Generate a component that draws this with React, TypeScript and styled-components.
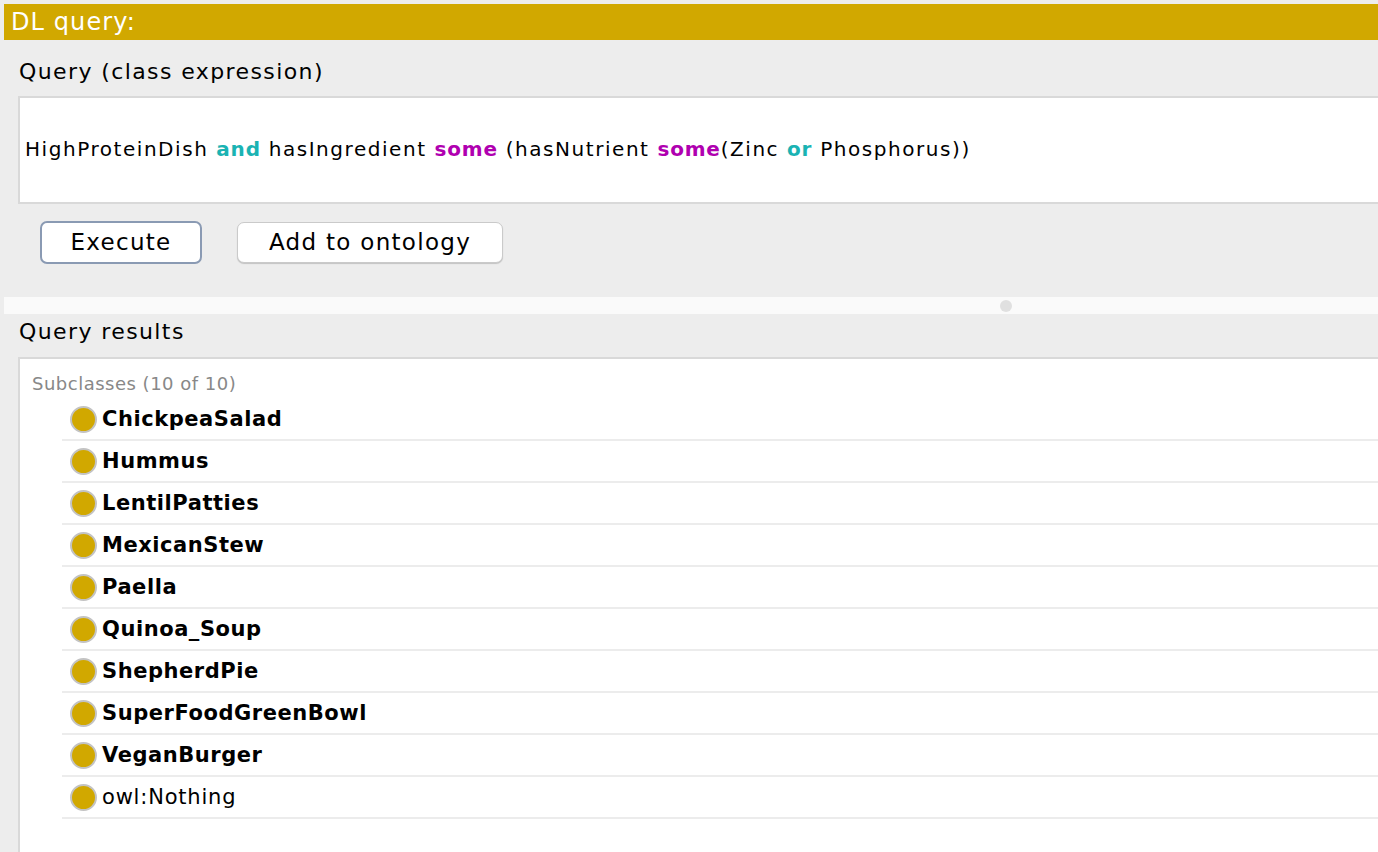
import React from "react";
import styled, { createGlobalStyle } from "styled-components";

const Global = createGlobalStyle`
  html, body { margin: 0; padding: 0; background: #ededed; }
  body { font-family: "DejaVu Sans", "Noto Sans", sans-serif; color: #000; }
`;

const Page = styled.div`
  width: 1378px;
  height: 852px;
  overflow: hidden;
  padding-top: 4px;
  box-sizing: border-box;
  display: flex;
  flex-direction: column;
`;

const TitleBar = styled.div`
  margin-left: 4px;
  height: 36px;
  background: #d1a800;
  color: #fff;
  font-size: 24px;
  line-height: 36px;
  padding-left: 7px;
  letter-spacing: 1.1px;
`;

const Section = styled.section<{ $grow?: boolean }>`
  padding-left: 18px;
  display: flex;
  flex-direction: column;
  flex: ${(p) => (p.$grow ? 1 : "none")};
`;

const SectionLabel = styled.div<{ $top: number; $bottom: number }>`
  font-size: 22px;
  height: 30px;
  line-height: 30px;
  padding-left: 1px;
  margin-top: ${(p) => p.$top}px;
  margin-bottom: ${(p) => p.$bottom}px;
  letter-spacing: 1.4px;
`;

const Editor = styled.div`
  height: 101px;
  background: #fff;
  border: 2px solid #d9d9d9;
  border-right: none;
  display: flex;
  align-items: center;
  padding-left: 5px;
  padding-bottom: 3px;
  font-size: 20px;
  letter-spacing: 1.55px;
  box-sizing: content-box;
`;

const Kw = styled.span<{ $c: string }>`
  color: ${(p) => p.$c};
  font-weight: bold;
  letter-spacing: 0.8px;
`;

const Buttons = styled.div`
  display: flex;
  align-items: center;
  gap: 35px;
  padding-left: 22px;
  height: 60px;
  margin-top: 15px;
`;

const Button = styled.button<{ $focused?: boolean; $w: number }>`
  width: ${(p) => p.$w}px;
  height: ${(p) => (p.$focused ? 43 : 41)}px;
  background: #fff;
  border-radius: 7px;
  border: ${(p) => (p.$focused ? "2px solid #8a9ab3" : "1px solid #cacaca")};
  box-shadow: ${(p) => (p.$focused ? "none" : "0 1px 1px rgba(0,0,0,0.18)")};
  font-family: "DejaVu Sans", sans-serif;
  font-size: 23px;
  letter-spacing: 1.3px;
  color: #000;
  padding: 0;
  margin-top: -14px;
`;

const Splitter = styled.div`
  margin-top: 18px;
  margin-left: 4px;
  height: 17px;
  background: #fafafa;
  display: flex;
  align-items: center;
  padding-left: 996px;
`;

const Grip = styled.div`
  width: 12px;
  height: 12px;
  border-radius: 50%;
  background: #e0e0e0;
`;

const ResultsBox = styled.div`
  flex: 1;
  background: #fff;
  border-left: 2px solid #d9d9d9;
  border-top: 2px solid #d9d9d9;
  display: flex;
  flex-direction: column;
`;

const GroupLabel = styled.div`
  font-size: 18px;
  color: #888;
  padding-left: 12px;
  padding-top: 10px;
  height: 30px;
  line-height: 30px;
  letter-spacing: 0.5px;
`;

const List = styled.ul`
  list-style: none;
  margin: 0;
  padding: 0 0 0 42px;
`;

const Row = styled.li`
  height: 40px;
  border-bottom: 2px solid #ececec;
  display: flex;
  align-items: center;
  padding-left: 8px;
  gap: 5px;
`;

const Dot = styled.span`
  width: 23px;
  height: 23px;
  border-radius: 50%;
  background: #d1a800;
  border: 2px solid #c3c3c3;
  flex: none;
`;

const Name = styled.span<{ $bold: boolean }>`
  font-size: 21px;
  font-weight: ${(p) => (p.$bold ? "bold" : "normal")};
  letter-spacing: ${(p) => (p.$bold ? 0.55 : 0.8)}px;
`;

const items = [
  "ChickpeaSalad",
  "Hummus",
  "LentilPatties",
  "MexicanStew",
  "Paella",
  "Quinoa_Soup",
  "ShepherdPie",
  "SuperFoodGreenBowl",
  "VeganBurger",
];

export default function App() {
  return (
    <Page>
      <Global />
      <TitleBar>DL query:</TitleBar>
      <Section>
        <SectionLabel $top={17} $bottom={9}>Query (class expression)</SectionLabel>
        <Editor>
          <span>
            HighProteinDish <Kw $c="#1ab3b3">and</Kw> hasIngredient{" "}
            <Kw $c="#b000b0">some</Kw> (hasNutrient <Kw $c="#b000b0">some</Kw>(Zinc{" "}
            <Kw $c="#1ab3b3">or</Kw> Phosphorus))
          </span>
        </Editor>
        <Buttons>
          <Button $focused $w={162}>Execute</Button>
          <Button $w={266}>Add to ontology</Button>
        </Buttons>
      </Section>
      <Splitter>
        <Grip />
      </Splitter>
      <Section $grow>
        <SectionLabel $top={3} $bottom={10}>Query results</SectionLabel>
        <ResultsBox>
          <GroupLabel>Subclasses (10 of 10)</GroupLabel>
          <List>
            {items.map((n) => (
              <Row key={n}>
                <Dot />
                <Name $bold>{n}</Name>
              </Row>
            ))}
            <Row>
              <Dot />
              <Name $bold={false}>owl:Nothing</Name>
            </Row>
          </List>
        </ResultsBox>
      </Section>
    </Page>
  );
}
